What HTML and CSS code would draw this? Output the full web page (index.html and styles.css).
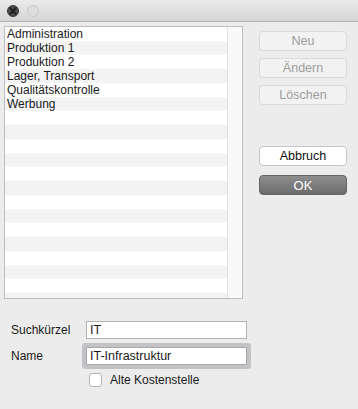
FILE: index.html
```html
<!DOCTYPE html>
<html>
<head>
<meta charset="utf-8">
<link rel="stylesheet" href="styles.css">
</head>
<body>
<div class="window">
  <div class="titlebar">
    <span class="light close"><svg width="8" height="8" viewBox="0 0 8 8"><path d="M1.2 1.2 L6.8 6.8 M6.8 1.2 L1.2 6.8" stroke="#1e1e1e" stroke-width="1.8" stroke-linecap="round"/></svg></span>
    <span class="light off"></span>
  </div>
  <div class="main">
    <div class="list">
      <div class="rows">
        <div class="row">Administration</div>
        <div class="row">Produktion 1</div>
        <div class="row">Produktion 2</div>
        <div class="row">Lager, Transport</div>
        <div class="row">Qualitätskontrolle</div>
        <div class="row">Werbung</div>
        <div class="row"></div><div class="row"></div><div class="row"></div><div class="row"></div>
        <div class="row"></div><div class="row"></div><div class="row"></div><div class="row"></div>
        <div class="row"></div><div class="row"></div><div class="row"></div><div class="row"></div>
        <div class="row"></div><div class="row"></div>
      </div>
      <div class="scroll"></div>
    </div>
    <div class="buttons">
      <button class="btn disabled">Neu</button>
      <button class="btn disabled">Ändern</button>
      <button class="btn disabled">Löschen</button>
      <button class="btn cancel">Abbruch</button>
      <button class="btn ok">OK</button>
    </div>
  </div>
  <div class="form">
    <div class="field">
      <label class="lbl">Suchkürzel</label>
      <div class="input">IT</div>
    </div>
    <div class="field">
      <label class="lbl">Name</label>
      <div class="input focus">IT-Infrastruktur</div>
    </div>
    <div class="check">
      <span class="box"></span>
      <span class="clabel">Alte Kostenstelle</span>
    </div>
  </div>
</div>
</body>
</html>
```

FILE: styles.css
```css
html, body {
  margin: 0;
  padding: 0;
}
body {
  width: 358px;
  height: 409px;
  background: #ececec;
  font-family: "Liberation Sans", Arial, sans-serif;
  font-size: 12px;
  color: #1a1a1a;
  overflow: hidden;
}
.titlebar {
  height: 21px;
  border-bottom: 1px solid #b3b3b3;
  background: linear-gradient(#ebebeb, #d5d5d5);
  display: flex;
  align-items: center;
  padding-left: 7px;
  gap: 8px;
  box-sizing: content-box;
}
.light {
  width: 12px;
  height: 12px;
  border-radius: 50%;
  box-sizing: border-box;
  display: flex;
  align-items: center;
  justify-content: center;
  margin-top: 1px;
}
.close {
  background: #4d4d4d;
  border: 1px solid #3a3a3a;
}
.close svg {
  display: block;
}
.off {
  background: #dedede;
  border: 1px solid #c9c9c9;
}
.main {
  display: flex;
  padding: 4px 0 0 4px;
}
.list {
  width: 239px;
  height: 273px;
  box-sizing: border-box;
  border: 1px solid #bdbdbd;
  background: #fff;
  display: flex;
  overflow: hidden;
}
.rows {
  width: 222px;
  overflow: hidden;
}
.row {
  height: 14px;
  line-height: 14px;
  padding-left: 2px;
  white-space: nowrap;
}
.row:nth-child(even) {
  background: #f3f3f3;
}
.scroll {
  flex: 1;
  border-left: 1px solid #e2e2e2;
  background: #f9f9f9;
}
.buttons {
  margin-left: 16px;
  margin-top: 5px;
  display: flex;
  flex-direction: column;
  width: 88px;
}
.btn {
  height: 20px;
  width: 88px;
  margin: 0 0 7px 0;
  padding: 0;
  border-radius: 4px;
  font-family: "Liberation Sans", Arial, sans-serif;
  font-size: 12.5px;
  box-sizing: border-box;
}
.disabled {
  background: #f2f2f2;
  border: 1px solid #dadada;
  color: #9d9d9d;
}
.cancel {
  margin-top: 34px;
  margin-bottom: 9px;
  background: #fff;
  border: 1px solid #c6c6c6;
  color: #111;
}
.ok {
  background: linear-gradient(#8e8e8e, #6c6c6c);
  border: 1px solid #666;
  color: #fff;
  font-size: 13px;
}
.form {
  padding: 22px 0 0 11px;
}
.field {
  display: flex;
  align-items: center;
  height: 18px;
  margin-bottom: 8px;
}
.lbl {
  width: 75px;
}
.input {
  width: 161px;
  height: 18px;
  box-sizing: border-box;
  border: 1px solid #b2b2b2;
  background: #fff;
  line-height: 16px;
  padding-left: 3px;
  font-size: 12.5px;
}
.input.focus {
  box-shadow: 0 0 0 4px #c3c2c7;
  border-color: #a8a8a8;
  border-radius: 1px;
}
.check {
  display: flex;
  align-items: center;
  margin-left: 78px;
  margin-top: 3px;
}
.box {
  width: 13px;
  height: 14px;
  box-sizing: border-box;
  border: 1px solid #b5b5b5;
  border-radius: 3px;
  background: #fff;
}
.clabel {
  margin-left: 8px;
}
```
